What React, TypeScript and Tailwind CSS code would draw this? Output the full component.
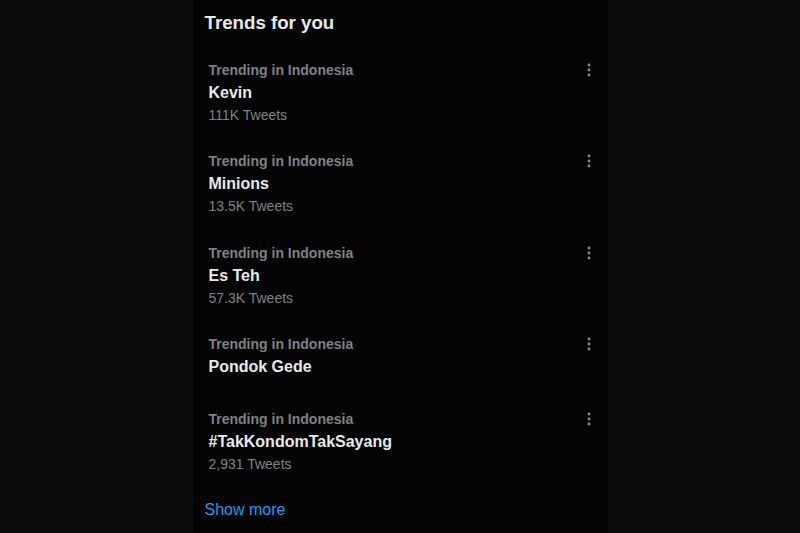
type Trend = {
  name: string;
  count?: string;
};

const trends: Trend[] = [
  { name: "Kevin", count: "111K Tweets" },
  { name: "Minions", count: "13.5K Tweets" },
  { name: "Es Teh", count: "57.3K Tweets" },
  { name: "Pondok Gede" },
  { name: "#TakKondomTakSayang", count: "2,931 Tweets" },
];

function MoreIcon() {
  return (
    <svg width="6" height="16" viewBox="0 0 6 16" className="text-[#8b8f94]">
      <circle cx="3" cy="3" r="1.4" fill="currentColor" />
      <circle cx="3" cy="8" r="1.4" fill="currentColor" />
      <circle cx="3" cy="13" r="1.4" fill="currentColor" />
    </svg>
  );
}

function TrendRow({ trend }: { trend: Trend }) {
  return (
    <div
      className={`flex justify-between pl-4 pr-4 pt-3 ${
        trend.count ? "pb-[11.5px]" : "pb-[17.5px]"
      }`}
    >
      <div className="flex flex-col">
        <span className="text-[14px] leading-[22px] font-bold text-[#7d8186]">
          Trending in Indonesia
        </span>
        <span className="text-[16px] leading-[23px] font-bold text-[#e7e9ea]">
          {trend.name}
        </span>
        {trend.count && (
          <span className="text-[14px] leading-[23px] text-[#7d8186]">
            {trend.count}
          </span>
        )}
      </div>
      <div className="pt-[3px]">
        <MoreIcon />
      </div>
    </div>
  );
}

export default function App() {
  return (
    <div
      className="flex h-[533px] w-full justify-center bg-[#0b0c0c]"
      style={{ fontFamily: '"Liberation Sans", Arial, sans-serif' }}
    >
      <div className="flex w-[415px] flex-col bg-[#040404]">
        <div className="flex h-[47px] items-center px-3">
          <h2 className="text-[18.7px] font-bold text-[#e7e9ea]">
            Trends for you
          </h2>
        </div>
        {trends.map((t) => (
          <TrendRow key={t.name} trend={t} />
        ))}
        <div className="flex h-[46px] items-center px-3">
          <span className="text-[16px] text-[#1d9bf0]">Show more</span>
        </div>
      </div>
    </div>
  );
}
